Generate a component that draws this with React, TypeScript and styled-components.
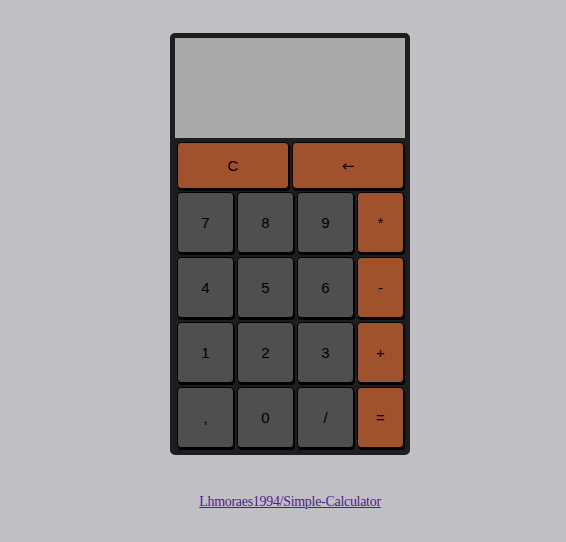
import React from "react";
import styled, { createGlobalStyle } from "styled-components";

const Global = createGlobalStyle`
  html, body { margin: 0; padding: 0; background: #c0bfc4; }
  body { font-family: "Liberation Serif", "Times New Roman", serif; }
`;

const Page = styled.div`
  display: flex;
  flex-direction: column;
  align-items: center;
  padding: 33px 0 0 14px;
`;

const Calculator = styled.div`
  box-sizing: border-box;
  width: 240px;
  border: 5px solid #1e1e1e;
  border-radius: 5px;
  background: #1e1e1e;
  display: flex;
  flex-direction: column;
`;

const Display = styled.div`
  height: 100px;
  background: #aaaaaa;
`;

const Keypad = styled.div`
  display: flex;
  flex-direction: column;
  padding: 4px 1px 2px 2px;
`;

const TopRow = styled.div`
  display: grid;
  grid-template-columns: 112px 112px;
  column-gap: 3px;
  height: 47px;
  margin-bottom: 3px;
`;

const Grid = styled.div`
  display: grid;
  grid-template-columns: 57px 57px 57px 47px;
  grid-auto-rows: 61px;
  column-gap: 3px;
  row-gap: 4px;
`;

const Key = styled.button<{ $op?: boolean }>`
  box-sizing: border-box;
  margin: 0;
  padding: 0;
  border: 1px solid #000;
  border-radius: 4px;
  box-shadow: 1px 2px 0 #000;
  background: ${(p) => (p.$op ? "#a0522d" : "#4f4f4f")};
  color: #000;
  font-family: "Liberation Sans", Arial, sans-serif;
  font-size: 15px;
  display: flex;
  align-items: center;
  justify-content: center;
  cursor: pointer;
`;

const Arrow = styled.span`
  font-family: "DejaVu Sans", sans-serif;
  font-size: 15px;
  line-height: 1;
  position: relative;
  top: 1px;
`;

const Footer = styled.a`
  margin-top: 39px;
  font-size: 14px;
  letter-spacing: -0.3px;
  color: #551a8b;
  text-decoration: underline;
`;

const keys: { label: string; op?: boolean }[] = [
  { label: "7" }, { label: "8" }, { label: "9" }, { label: "*", op: true },
  { label: "4" }, { label: "5" }, { label: "6" }, { label: "-", op: true },
  { label: "1" }, { label: "2" }, { label: "3" }, { label: "+", op: true },
  { label: "," }, { label: "0" }, { label: "/" }, { label: "=", op: true },
];

export default function App() {
  return (
    <>
      <Global />
      <Page>
        <Calculator>
          <Display />
          <Keypad>
            <TopRow>
              <Key $op>C</Key>
              <Key $op>
                <Arrow>←</Arrow>
              </Key>
            </TopRow>
            <Grid>
              {keys.map((k) => (
                <Key key={k.label} $op={k.op}>
                  {k.label}
                </Key>
              ))}
            </Grid>
          </Keypad>
        </Calculator>
        <Footer href="#">Lhmoraes1994/Simple-Calculator</Footer>
      </Page>
    </>
  );
}
